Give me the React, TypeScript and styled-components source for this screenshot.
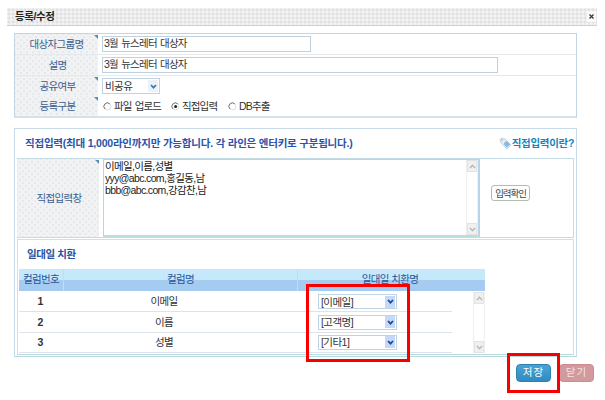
import React from 'react';
import styled, { createGlobalStyle } from 'styled-components';

const Global = createGlobalStyle`
  * { box-sizing: border-box; }
  body { margin: 0; background: #fff; }
`;

const dots = `
  background-color: #f1f2f3;
  background-image: radial-gradient(#e6e8ea 0.8px, transparent 1px), radial-gradient(#e6e8ea 0.8px, transparent 1px);
  background-size: 6px 6px;
  background-position: 0 0, 3px 3px;
`;

const Page = styled.div`
  position: relative;
  width: 605px;
  height: 400px;
  padding-top: 8px;
  overflow: hidden;
  background: #fff;
  color: #333;
  font: 10.5px/13px 'Liberation Sans', 'Noto Sans CJK KR', sans-serif;
  letter-spacing: -0.7px;
  white-space: nowrap;
`;

const TitleBar = styled.header`
  display: flex;
  align-items: center;
  justify-content: space-between;
  width: 590px;
  height: 18px;
  margin-left: 7px;
  padding: 0 1px 1px 8px;
  border-bottom: 1px solid #cfcfcf;
  background-color: #ebebeb;
  background-image: radial-gradient(#e2e2e2 0.8px, transparent 1px), radial-gradient(#f4f4f4 0.8px, transparent 1px);
  background-size: 4px 4px;
  background-position: 0 0, 2px 2px;
  color: #222;
  font-weight: bold;
  letter-spacing: -0.4px;
`;

const CloseBox = styled.span`
  display: grid;
  place-items: center;
  width: 9px;
  height: 11px;
  background: #fafafa;
`;

const FormPanel = styled.section`
  width: 563px;
  height: 85px;
  margin: 7px 0 0 14px;
  border: 1px solid #c3d5e3;
  border-bottom: 2px solid #d5e0e8;
`;

const FormRow = styled.div<{ $h: number; $line?: boolean }>`
  display: flex;
  height: ${p => p.$h}px;
  border-bottom: ${p => (p.$line ? '1px solid #e3e8ed' : '0')};
`;

const Label = styled.div<{ $w: number; $pad: number; $required?: boolean }>`
  ${dots}
  position: relative;
  display: flex;
  align-items: center;
  justify-content: center;
  width: ${p => p.$w}px;
  padding-left: ${p => p.$pad}px;
  color: #3c5f8e;
  &::after {
    content: '';
    display: ${p => (p.$required ? 'block' : 'none')};
    position: absolute;
    top: 1px;
    right: 0;
    border-top: 4px solid #5c8db5;
    border-left: 4px solid transparent;
  }
`;

const Field = styled.div`
  display: flex;
  align-items: center;
  padding-left: 4px;
`;

const TextInput = styled.div<{ $w: number }>`
  width: ${p => p.$w}px;
  height: 16px;
  padding-left: 1px;
  border: 1px solid #bfd0de;
  line-height: 13px;
  letter-spacing: -0.75px;
  word-spacing: 1px;
`;

const SelectBox = styled.div<{ $w: number; $h: number; $ml?: number }>`
  display: flex;
  align-items: center;
  justify-content: space-between;
  width: ${p => p.$w}px;
  height: ${p => p.$h}px;
  margin-left: ${p => p.$ml ?? 0}px;
  padding: 0 1px 0 2px;
  border: 1px solid #bfd3e3;
  background: #fff;
  line-height: 12px;
  letter-spacing: -0.55px;
`;

const SelectArrow = styled.span<{ $pale?: boolean }>`
  display: grid;
  place-items: center;
  width: 10px;
  height: 12px;
  background: ${p => (p.$pale ? '#e9f2fb' : '#c3d8fa')};
`;

const Radios = styled.div`
  display: flex;
  align-items: center;
  padding-left: 5px;
`;

const Radio = styled.span<{ $w: number }>`
  display: flex;
  align-items: center;
  gap: 2px;
  width: ${p => p.$w}px;
  letter-spacing: -0.85px;
  word-spacing: 1px;
`;

const InputPanel = styled.section`
  width: 563px;
  height: 229px;
  margin: 10px 0 0 14px;
  padding: 0 2px;
  border: 1px solid #c8dbe8;
  border-bottom-color: #b5d9de;
`;

const InputHead = styled.div`
  display: flex;
  align-items: center;
  justify-content: space-between;
  height: 29px;
  padding-left: 8px;
  color: #2b53a8;
  font-weight: bold;
  letter-spacing: -0.21px;
`;

const HelpLink = styled.span`
  display: flex;
  align-items: center;
  color: #0f86bd;
  letter-spacing: -0.3px;
`;

const EntryRow = styled.div`
  display: flex;
  height: 80px;
  border: solid #c3dce8;
  border-width: 1px 1px 1px 0;
`;

const TextArea = styled.div`
  display: flex;
  justify-content: space-between;
  width: 377px;
  height: 78px;
  margin-left: 4px;
  border: 1px solid #b5d8e0;
  border-right: 2px solid #b9d4ea;
  border-bottom: 2px solid #b9dfe0;
`;

const Lines = styled.div`
  line-height: 12px;
  letter-spacing: -0.65px;
  color: #222;
  padding: 0 0 0 1px;
`;

const Scrollbar = styled.div`
  display: flex;
  flex-direction: column;
  justify-content: space-between;
  width: 12px;
  border-left: 1px solid #efefef;
  border-right: 1px solid #f0f0f0;
  background: #fff;
`;

const ScrollEnd = styled.span`
  display: grid;
  place-items: center;
  height: 12px;
  border: 1px solid #e3e3e3;
  background: #f0f0f0;
`;

const CheckButton = styled.button`
  width: 39px;
  height: 16px;
  margin: 26px 0 0 11px;
  padding: 0;
  border: 1px solid #adc0ab;
  border-radius: 3px;
  background: #fff;
  color: #444;
  font: inherit;
  font-size: 9.5px;
  line-height: 13px;
  letter-spacing: -1.1px;
`;

const MapPanel = styled.div`
  height: 116px;
  margin-top: 1px;
  padding-left: 1px;
  border: 1px solid #d0e0ea;
  border-bottom-color: #b9dadf;
`;

const MapTitle = styled.h2`
  display: flex;
  align-items: center;
  height: 29px;
  margin: 0;
  padding-left: 8px;
  color: #2b53a0;
  font-size: 10.5px;
  letter-spacing: -0.4px;
`;

const Columns = styled.div`
  display: grid;
  grid-template-columns: 45px 234px 187px;
`;

const HeadRow = styled(Columns)`
  width: 466px;
  height: 22px;
  background: linear-gradient(#c5e9fa 0 11px, #a6cbf1 11px);
  color: #28549a;
  line-height: 21px;
  letter-spacing: -0.6px;
`;

const HeadCell = styled.span`
  border-right: 1px solid #c2dcf0;
  text-align: center;
  &:last-child {
    padding-right: 3px;
    border-right: 0;
  }
`;

const TableBody = styled.div`
  display: flex;
  justify-content: space-between;
  width: 466px;
  padding-top: 1px;
`;

const BodyRow = styled(Columns)`
  grid-template-columns: 45px 234px 154px;
  width: 433px;
  height: 20.4px;
  align-items: center;
  border-bottom: 1px solid #dce3ea;
`;

const NumCell = styled.span`
  padding-right: 3px;
  text-align: center;
  font-weight: bold;
`;

const NameCell = styled.span`
  padding-right: 34px;
  text-align: center;
`;

const Actions = styled.footer`
  display: flex;
  gap: 8px;
  margin: 7px 0 0 516px;
`;

const ActionButton = styled.button<{ $muted?: boolean }>`
  width: 35px;
  height: 18px;
  padding: 0 0 1px;
  border: 1px solid ${p => (p.$muted ? '#c98d91' : '#2b82b2')};
  border-radius: 4px;
  background: ${p => (p.$muted ? '#d19a9d' : 'linear-gradient(#4ba3d3, #2f8cc0)')};
  color: ${p => (p.$muted ? '#f5e3e3' : '#fff')};
  font: inherit;
  line-height: 15px;
  letter-spacing: 1px;
`;

const Highlight = styled.div<{ $x: number; $y: number; $w: number; $h: number }>`
  position: absolute;
  left: ${p => p.$x}px;
  top: ${p => p.$y}px;
  width: ${p => p.$w}px;
  height: ${p => p.$h}px;
  border: 3px solid #f90000;
  pointer-events: none;
`;

const Chevron = ({ up, color = '#b9b9b9', w = 1.5 }: { up?: boolean; color?: string; w?: number }) => (
  <svg width="7" height="5" viewBox="0 0 7 5" fill="none" stroke={color} strokeWidth={w}>
    <path d={up ? 'M1 4 3.5 1.3 6 4' : 'M1 1 3.5 3.7 6 1'} />
  </svg>
);

const RadioMark = ({ on }: { on?: boolean }) => (
  <svg width="9" height="9" viewBox="0 0 9 9" fill="none">
    <circle cx="4.5" cy="4.5" r="3.4" fill="#fff" stroke="#ddd" />
    <path d="M2 7A3.5 3.5 0 0 1 6.8 1.8" stroke="#777" />
    {on && <circle cx="4.6" cy="4.6" r="1.5" fill="#222" />}
  </svg>
);

const TagIcon = () => (
  <svg width="13" height="13" viewBox="0 0 13 13">
    <path d="M1 2.5 2.5 1 6 2l6 6-4 4-6-6Z" fill="#e6eef4" stroke="#b7c6d2" strokeWidth=".8" />
    <path d="m5.5 5 2.7-.8L11 7.4 7.8 10.4 5 7.5Z" fill="#83bde3" />
    <circle cx="3" cy="3" r=".8" fill="#9aa9b5" />
  </svg>
);

const Scroll = () => (
  <Scrollbar>
    <ScrollEnd><Chevron up /></ScrollEnd>
    <ScrollEnd><Chevron /></ScrollEnd>
  </Scrollbar>
);

const rows = [
  ['1', '이메일', '[이메일]'],
  ['2', '이름', '[고객명]'],
  ['3', '성별', '[기타1]'],
];

export default function App() {
  return (
    <Page>
      <Global />
      <TitleBar>
        등록/수정
        <CloseBox>
          <svg width="5" height="5" viewBox="0 0 5 5" stroke="#333" strokeWidth="1.2"><path d="m.5.5 4 4m0-4-4 4" /></svg>
        </CloseBox>
      </TitleBar>
      <FormPanel>
        <FormRow $h={21} $line>
          <Label $w={83} $pad={0} $required>대상자그룹명</Label>
          <Field><TextInput $w={209}>3월 뉴스레터 대상자</TextInput></Field>
        </FormRow>
        <FormRow $h={21} $line>
          <Label $w={83} $pad={2}>설명</Label>
          <Field><TextInput $w={396}>3월 뉴스레터 대상자</TextInput></Field>
        </FormRow>
        <FormRow $h={20}>
          <Label $w={83} $pad={2} $required>공유여부</Label>
          <Field>
            <SelectBox $w={58} $h={16}>비공유<SelectArrow $pale><Chevron color="#3c7aa8" w={1.7} /></SelectArrow></SelectBox>
          </Field>
        </FormRow>
        <FormRow $h={20}>
          <Label $w={83} $pad={2} $required>등록구분</Label>
          <Radios>
            <Radio $w={68}><RadioMark />파일 업로드</Radio>
            <Radio $w={57}><RadioMark on />직접입력</Radio>
            <Radio $w={50}><RadioMark />DB추출</Radio>
          </Radios>
        </FormRow>
      </FormPanel>
      <InputPanel>
        <InputHead>
          직접입력(최대 1,000라인까지만 가능합니다. 각 라인은 엔터키로 구분됩니다.)
          <HelpLink><TagIcon />직접입력이란?</HelpLink>
        </InputHead>
        <EntryRow>
          <Label $w={82} $pad={2} $required>직접입력창</Label>
          <TextArea>
            <Lines>이메일,이름,성별<br />yyy@abc.com,홍길동,남<br />bbb@abc.com,강감찬,남</Lines>
            <Scroll />
          </TextArea>
          <CheckButton>입력확인</CheckButton>
        </EntryRow>
        <MapPanel>
          <MapTitle>일대일 치환</MapTitle>
          <HeadRow>
            <HeadCell>컬럼번호</HeadCell>
            <HeadCell>컬럼명</HeadCell>
            <HeadCell>일대일 치환명</HeadCell>
          </HeadRow>
          <TableBody>
            <div>
              {rows.map(([n, name, target]) => (
                <BodyRow key={n}>
                  <NumCell>{n}</NumCell>
                  <NameCell>{name}</NameCell>
                  <SelectBox $w={79} $h={15} $ml={20}>{target}<SelectArrow><Chevron color="#244c8b" w={1.8} /></SelectArrow></SelectBox>
                </BodyRow>
              ))}
            </div>
            <Scroll />
          </TableBody>
        </MapPanel>
      </InputPanel>
      <Actions>
        <ActionButton>저장</ActionButton>
        <ActionButton $muted>닫기</ActionButton>
      </Actions>
      <Highlight $x={306} $y={284} $w={104} $h={78} />
      <Highlight $x={507} $y={353} $w={53} $h={40} />
    </Page>
  );
}
